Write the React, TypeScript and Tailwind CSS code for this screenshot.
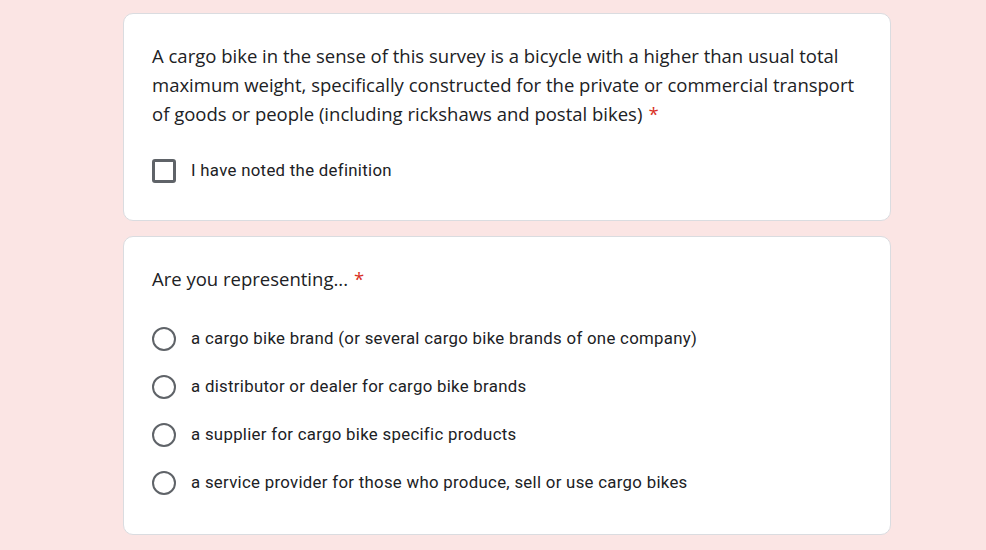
const options = [
  "a cargo bike brand (or several cargo bike brands of one company)",
  "a distributor or dealer for cargo bike brands",
  "a supplier for cargo bike specific products",
  "a service provider for those who produce, sell or use cargo bikes",
];

function Card({ children, className = "" }: { children: React.ReactNode; className?: string }) {
  return (
    <div className={`w-[768px] rounded-[10px] border border-[#dadce0] bg-white px-[28px] pt-[28px] ${className}`}>
      {children}
    </div>
  );
}

function Title({ children }: { children: React.ReactNode }) {
  return (
    <div className="font-['Open_Sans',sans-serif] text-[18.5px] leading-[28.8px] text-[#202124]">
      {children}
      <span className="ml-[6px] text-[#d93025]">*</span>
    </div>
  );
}

export default function App() {
  return (
    <div className="min-h-[550px] w-full bg-[#fbe5e4] pl-[123px] pt-[13px]">
      <Card className="h-[208px]">
        <Title>
          A cargo bike in the sense of this survey is a bicycle with a higher than usual total maximum weight,
          specifically constructed for the private or commercial transport of goods or people (including rickshaws
          and postal bikes)
        </Title>
        <label className="mt-[30px] flex items-center">
          <span className="h-[24px] w-[24px] rounded-[3px] border-[3px] border-[#5f6368]" />
          <span className="ml-[15px] font-['Roboto',sans-serif] text-[16.8px] tracking-[0.3px] text-[#202124]">
            I have noted the definition
          </span>
        </label>
      </Card>
      <Card className="mt-[15px] h-[299px]">
        <Title>Are you representing...</Title>
        <div className="mt-[21px] flex flex-col">
          {options.map((o) => (
            <label key={o} className="flex h-[48px] items-center">
              <span className="h-[24px] w-[24px] rounded-full border-[2.5px] border-[#5f6368]" />
              <span className="ml-[15px] font-['Roboto',sans-serif] text-[16.8px] tracking-[0.3px] text-[#202124]">
                {o}
              </span>
            </label>
          ))}
        </div>
      </Card>
    </div>
  );
}
